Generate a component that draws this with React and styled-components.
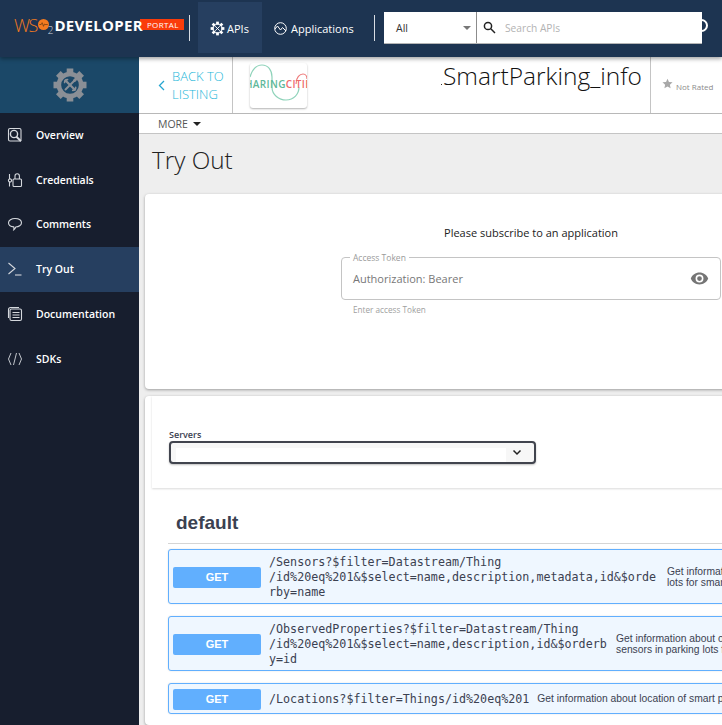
import React from "react";
import styled, { createGlobalStyle } from "styled-components";

const Global = createGlobalStyle`
  html, body { margin: 0; padding: 0; width: 722px; height: 725px; overflow: hidden; background: #eeeeee; }
  * { box-sizing: border-box; }
  body { font-family: "Open Sans", sans-serif; }
`;
const Page = styled.div`display: flex; flex-direction: column; width: 722px; height: 725px; overflow: hidden;`;
const Header = styled.header`
  height: 57px; flex: none; background: #1d3451; display: flex; align-items: flex-start; position: relative; z-index: 2;
  box-shadow: 0 2px 4px rgba(0,0,0,.35);
`;
const Logo = styled.div`display: flex; align-items: center; width: 189px; height: 49px; padding-left: 14px; flex: none;`;
const Wso = styled.span`font: 300 18px "Open Sans", sans-serif; letter-spacing: -1.6px; color: #f47b20;`;
const Dot = styled.svg`width: 11px; height: 11px; margin: 0 -1px 0 1px; flex: none;`;
const Two = styled.span`font: 300 10px/10px "Open Sans", sans-serif; color: #cfd6df; margin: 10px 1px 0 0;`;
const Dev = styled.span`font: 700 15px "Open Sans", sans-serif; letter-spacing: .3px; color: #fff; position: relative; z-index: 1;`;
const Portal = styled.span`font: 400 8px "Open Sans", sans-serif; letter-spacing: .4px; color: #fff; background: #fa3c0a; height: 11px; line-height: 11px; width: 44px; text-align: right; padding-right: 5px; flex: none; margin-left: -3px;`;
const Sep = styled.div`width: 1px; height: 26px; background: #d8dde3; margin-top: 15px; flex: none;`;
const TopTab = styled.div`
  display: flex; align-items: center; gap: ${p => p.$gap}px; height: 51px; margin: 2px 0 0 ${p => p.$ml}px; padding: 2px 0 0 ${p => p.$pl}px; width: ${p => p.$w}px; flex: none;
  color: #fff; font-size: 11px; background: ${p => p.$active ? "#263f60" : "transparent"};
`;
const SearchBar = styled.div`display: flex; height: 32px; margin: 12px 0 0 9px; background: #fff; width: 318px; flex: none; position: relative; border-bottom: 1px solid #b5b5b5;`;
const Ghost = styled.div`position: absolute; right: -6px; top: 7px; width: 13px; height: 13px; border: 2px solid #fff; border-radius: 50%; z-index: -1;`;
const SelectBox = styled.div`width: 93px; flex: none; border-right: 1px solid #8c8c8c; display: flex; align-items: center; justify-content: space-between; padding: 0 5px 0 12px; font-size: 10.5px; color: #333;`;
const Caret = styled.span`width: 0; height: 0; border: 4px solid transparent; border-top: 4px solid ${p => p.$c || "#777"}; border-bottom: 0;`;
const SearchInput = styled.div`flex: 1; display: flex; align-items: center; padding-left: 6px; gap: 9px; color: #b3b3b3; font-size: 10.2px; font-weight: 400;`;
const Body = styled.div`flex: 1; display: flex; min-height: 0;`;
const Sidebar = styled.aside`width: 139px; flex: none; background: #171e2e; display: flex; flex-direction: column;`;
const SideLogo = styled.div`height: 56px; background: #1b4868; display: flex; align-items: center; justify-content: center;`;
const NavItem = styled.div`
  height: 44.8px; display: flex; align-items: center; gap: 13px; padding: 0 0 1px 7px; color: #fff; font-size: 10.5px; font-weight: 600;
  background: ${p => p.$active ? "#263f60" : "transparent"};
`;
const Main = styled.main`flex: 1; min-width: 0; display: flex; flex-direction: column; background: #eeeeee; overflow: hidden;`;
const InfoBar = styled.div`height: 57px; flex: none; background: #fff; border-bottom: 1px solid #b8b8b8; display: flex;`;
const Back = styled.div`width: 94px; flex: none; border-right: 1px solid #c4c4c4; display: flex; align-items: center; gap: 7px; padding-left: 19px; color: #25b7d9; font-size: 13px; line-height: 18px; font-weight: 300;`;
const Thumb = styled.div`width: 57px; height: 45px; margin: 6px 0 0 17px; flex: none; background: #fff; border-radius: 3px; box-shadow: 0 1px 2px rgba(0,0,0,.3); position: relative; overflow: hidden;`;
const ThumbLines = styled.svg`position: absolute; left: 0; top: 0;`;
const ThumbText = styled.span`position: absolute; left: -5px; top: 14px; font-size: 10px; line-height: 14px; letter-spacing: .35px; font-weight: 600; color: #5fb89a; white-space: nowrap;`;
const ThumbRed = styled.span`color: #ee6a6a;`;
const Title = styled.h1`
  margin: 0; flex: 1; padding: 3px 0 0 136px; font-size: 24.5px; font-weight: 300; color: #111; line-height: 32px; white-space: nowrap;
  &::before { content: ""; display: inline-block; width: 1px; height: 1px; background: #333; margin: 0 1px 0 -2px; }
`;
const Rating = styled.div`width: 72px; flex: none; border-left: 1px solid #c4c4c4; display: flex; align-items: flex-start; gap: 3px; padding: 21px 0 0 11px; font-size: 8px; color: #8c8c8c; white-space: nowrap;`;
const RatingText = styled.span`margin-top: 3px;`;
const MoreBar = styled.div`height: 20px; flex: none; background: #fff; border-bottom: 1px solid #c4c4c4; display: flex; align-items: center; gap: 5px; padding-left: 19px; font-size: 10.5px; color: #555;`;
const PageTitle = styled.h2`margin: 0; height: 60px; flex: none; padding: 10px 0 0 13px; font-size: 24.3px; font-weight: 300; color: #222; line-height: 32px;`;
const Card = styled.section`width: 772px; margin-left: 6px; flex: none; background: #fff; border-radius: 4px; box-shadow: 0 1px 3px rgba(0,0,0,.35);`;
const TokenCard = styled(Card)`height: 195px; display: flex; flex-direction: column; align-items: center; padding-top: 31px;`;
const Subscribe = styled.div`font-size: 11px; color: #222; line-height: 15px;`;
const TokenField = styled.div`
  width: 380px; height: 43px; margin-top: 17px; padding: 0 11px; border: 1px solid #c4c4c4; border-radius: 4px;
  display: flex; align-items: center; justify-content: space-between; position: relative; color: #777; font-size: 11px;
`;
const Legend = styled.span`position: absolute; left: 8px; top: -5px; background: #fff; font-size: 8.5px; color: #9a9a9a; padding: 0 3px; line-height: 9px;`;
const EyeIcon = styled.svg`width: 19px; height: 19px;`;
const Helper = styled.div`width: 380px; padding: 4px 0 0 12px; font-size: 8.2px; color: #a0a0a0;`;
const SwaggerCard = styled(Card)`margin-top: 7px; padding-left: 7px; flex: 1;`;
const Schemes = styled.div`height: 92px; padding: 33px 0 0 17px; box-shadow: 0 1px 2px rgba(0,0,0,.15); background: #fff;`;
const ServersLabel = styled.div`font: 600 9px/12px "Open Sans", sans-serif; color: #3b4151;`;
const ServerSelect = styled.div`width: 367px; height: 23px; border: 2px solid #41444e; border-radius: 4px; display: flex; padding-top: 5px; background: #f7f7f7; box-shadow: 0 1px 2px rgba(0,0,0,.25);`;
const SelectInner = styled.div`width: 330px; margin-left: 5px; height: 14px; background: #fff;`;
const Chevron = styled.svg`width: 10px; height: 10px; margin: -1px 0 0 6px;`;
const Ops = styled.div`padding: 22px 0 0 16px;`;
const Tag = styled.h3`margin: 0 0 5px; padding-left: 8px; height: 34px; font: 700 19px/26px "Liberation Sans", sans-serif; color: #3b4151; border-bottom: 1px solid #d5d5d5;`;
const OpBlock = styled.div`
  display: flex; align-items: center; margin-top: ${p => p.$mt}px; padding: 4px 0 3px; width: 700px; min-height: 31px;
  background: #eff7ff; border: 1px solid #61affe; border-radius: 3px; box-shadow: 0 0 2px rgba(0,0,0,.12);
`;
const Method = styled.div`width: 88px; height: 21px; flex: none; margin-left: 4px; background: #61affe; color: #fff; border-radius: 2px; text-align: center; font: 700 11px/21px "Liberation Sans", sans-serif;`;
const Path = styled.div`
  margin: 1px 0 0 8px; max-width: ${p => p.$w}px; flex: none; font: 400 11.7px/15px "DejaVu Sans Mono", monospace; color: #3b4151; overflow-wrap: anywhere;
`;
const Desc = styled.div`margin-left: ${p => p.$ml}px; font: 400 10.3px/11.5px "Liberation Sans", sans-serif; color: #3b4151; white-space: nowrap;`;

const Gear = ({ size = 15, color = "#fff", ring = 2.4, cross = 2, tools = false }) => {
  const teeth = [0, 45, 90, 135, 180, 225, 270, 315];
  return (
    <svg width={size} height={size} viewBox="0 0 24 24" fill="none" style={{ flex: "none" }}>
      {teeth.map(a => <rect key={a} x="9.8" y="1" width="4.4" height="5" fill={color} transform={`rotate(${a} 12 12)`} />)}
      <circle cx="12" cy="12" r="7.4" stroke={color} strokeWidth={ring} />
      {tools ? (
        <g stroke={color} strokeLinecap="round">
          <path d="M9 15l6-6" strokeWidth="1.300" />
          <path d="M9 9l6.200 6.200" strokeWidth="1.500" />
          <path d="M8.400 10.400a2 2 0 0 1 2-2M15.800 13.600a2 2 0 0 1-2 2" strokeWidth="1.100" />
          <path d="M15 9l.8-.8" strokeWidth="2" />
        </g>
      ) : (
        <path d="M8.800 15.200l6.400-6.400M8.800 8.800l6.400 6.400" stroke={color} strokeWidth={cross} strokeLinecap="round" />
      )}
    </svg>
  );
};
const AppIcon = () => (
  <svg width="13" height="13" viewBox="0 0 13 13" fill="none" stroke="#fff" strokeWidth="1" style={{ flex: "none" }}>
    <circle cx="6.500" cy="6.500" r="5.800" />
    <path d="M1 7l2.500-3 3 4 2-2.500L12 9" />
  </svg>
);
const SearchIcon = () => (
  <svg width="13" height="13" viewBox="0 0 13 13" fill="none" stroke="#222" strokeWidth="1.500" style={{ flex: "none" }}>
    <circle cx="5" cy="5" r="3.600" /><path d="M7.800 7.800L12 12" />
  </svg>
);
const Ico = ({ children }) => (
  <svg width="16" height="16" viewBox="0 0 16 16" fill="none" stroke="#d5d8dd" strokeWidth="1.100" style={{ flex: "none" }}>{children}</svg>
);
const icons = {
  Overview: <Ico><rect x="1.500" y="1.500" width="12.500" height="12.500" rx="1.500" /><circle cx="7" cy="7" r="3.600" strokeWidth="1.400" /><path d="M9.500 9.800l4.500 4.500" strokeWidth="2" /></Ico>,
  Credentials: <Ico><rect x="6" y="7" width="8.500" height="7.500" rx="1" /><path d="M8 7V4a2.200 2.200 0 0 1 4.400 0v3" /><path d="M2.500 2v5M2.500 9.500v5" /><circle cx="3" cy="8.500" r="1.600" /></Ico>,
  Comments: <Ico><path d="M8 2.500c3.600 0 6.500 1.600 6.500 4.200S11.600 11 8.800 11c-.4 1-1 2-2 2.700.3-1 .2-1.900 0-2.800C3.800 10.600 1.500 9.100 1.500 6.700S4.400 2.500 8 2.500z" /></Ico>,
  "Try Out": <Ico><path d="M1.500 2l6.500 5.500L1.500 13" /><path d="M8 14h6.500" /></Ico>,
  Documentation: <Ico><path d="M1.500 12V3.500a2 2 0 0 1 2-2H12" /><rect x="3" y="3" width="11.500" height="11.500" rx="1.500" /><path d="M5.500 6.500h7M5.500 9h7M5.500 11.500h7" strokeWidth="1.200" /></Ico>,
  SDKs: <Ico><path d="M4 2L1.500 8 4 14M12 2l2.500 6L12 14M9.500 2l-3 12" strokeWidth=".9" /></Ico>,
};
const navs = ["Overview", "Credentials", "Comments", "Try Out", "Documentation", "SDKs"];
const ops = [
  { mt: 0, w: 390, ml: 8, p: <>/Sensors?$filter=Datastream/<wbr />Thing<wbr />/id%20eq%201&amp;$select=name,description,metadata,id&amp;$orderby=name</>, d: <>Get information about sensors in parking<br />lots for smart parking</> },
  { mt: 12, w: 340, ml: 7, p: <>/ObservedProperties?$filter=Datastream/<wbr />Thing<wbr />/id%20eq%201&amp;$select=name,description,id&amp;$orderby=id</>, d: <>Get information about observed properties of<br />sensors in parking lots for smart parking</> },
  { mt: 12, w: 400, ml: 8, p: <>/Locations?$filter=Things/id%20eq%201</>, d: <>Get information about location of smart parking lots in the city</> },
];

export default function App() {
  return (
    <Page>
      <Global />
      <Header>
        <Logo>
          <Wso>WS</Wso>
          <Dot viewBox="0 0 12 12"><circle cx="6" cy="6" r="6" fill="#f47b20" /><path d="M1.500 6h2l1-2 1.500 4 1-2.500.7.500h3" stroke="#5a3210" strokeWidth=".7" fill="none" /></Dot>
          <Two>2</Two>
          <Dev>DEVELOPER</Dev>
          <Portal>PORTAL</Portal>
        </Logo>
        <Sep />
        <TopTab $active $ml={8} $pl={12} $w={64} $gap={2}><Gear size={15} ring={1.600} cross={1.500} />APIs</TopTab>
        <TopTab $ml={0} $pl={12} $w={112} $gap={4}><AppIcon />Applications</TopTab>
        <Sep />
        <SearchBar>
          <Ghost />
          <SelectBox>All<Caret /></SelectBox>
          <SearchInput><SearchIcon />Search APIs</SearchInput>
        </SearchBar>
      </Header>
      <Body>
        <Sidebar>
          <SideLogo><Gear size={36} color="#8a8f96" ring={3} tools /></SideLogo>
          {navs.map(n => <NavItem key={n} $active={n === "Try Out"}>{icons[n]}{n}</NavItem>)}
        </Sidebar>
        <Main>
          <InfoBar>
            <Back>
              <svg width="7" height="11" viewBox="0 0 7 11" fill="none" stroke="#25a5d0" strokeWidth="1.300" style={{ flex: "none" }}><path d="M6 1L1.500 5.500 6 10" /></svg>
              <span>BACK TO LISTING</span>
            </Back>
            <Thumb>
              <ThumbLines width="57" height="45" viewBox="0 0 57 45" fill="none" stroke="#8fd3ba" strokeWidth="1.200">
                <path d="M0 14C3 4 8 2 12 2c6 0 10 5 10 12v10c0 8 7 13 14 13 8 0 13-6 13-13" />
                <path d="M46 21c0-7 4-10 7-10s4 3 4 5" stroke="#ee7a7a" />
              </ThumbLines>
              <ThumbText>HARING<ThumbRed>CITIES</ThumbRed></ThumbText>
            </Thumb>
            <Title>SmartParking_info</Title>
            <Rating>
              <svg width="11" height="11" viewBox="0 0 24 24" fill="#a8a8a8" style={{ flex: "none" }}><path d="M12 1.500l3.200 7 7.800.9-5.800 5.200 1.600 7.700L12 18.400l-6.800 3.900 1.600-7.700L1 9.400l7.800-.9z" /></svg>
              <RatingText>Not Rated</RatingText>
            </Rating>
          </InfoBar>
          <MoreBar>MORE <Caret $c="#222" /></MoreBar>
          <PageTitle>Try Out</PageTitle>
          <TokenCard>
            <Subscribe>Please subscribe to an application</Subscribe>
            <TokenField>
              <Legend>Access Token</Legend>
              <span>Authorization: Bearer</span>
              <EyeIcon viewBox="0 0 24 24"><path fill="#757575" d="M12 4.500C7 4.500 2.700 7.600 1 12c1.700 4.400 6 7.500 11 7.500s9.300-3.100 11-7.500c-1.700-4.400-6-7.500-11-7.500zM12 17a5 5 0 1 1 0-10 5 5 0 0 1 0 10zm0-8a3 3 0 1 0 0 6 3 3 0 0 0 0-6z" /></EyeIcon>
            </TokenField>
            <Helper>Enter access Token</Helper>
          </TokenCard>
          <SwaggerCard>
            <Schemes>
              <ServersLabel>Servers</ServersLabel>
              <ServerSelect>
                <SelectInner />
                <Chevron viewBox="0 0 10 10" fill="none" stroke="#222" strokeWidth="1.500"><path d="M1.500 3.500L5 7l3.500-3.500" /></Chevron>
              </ServerSelect>
            </Schemes>
            <Ops>
              <Tag>default</Tag>
              {ops.map((o, i) => (
                <OpBlock key={i} $mt={o.mt}>
                  <Method>GET</Method>
                  <Path $w={o.w}>{o.p}</Path>
                  <Desc $ml={o.ml}>{o.d}</Desc>
                </OpBlock>
              ))}
            </Ops>
          </SwaggerCard>
        </Main>
      </Body>
    </Page>
  );
}
